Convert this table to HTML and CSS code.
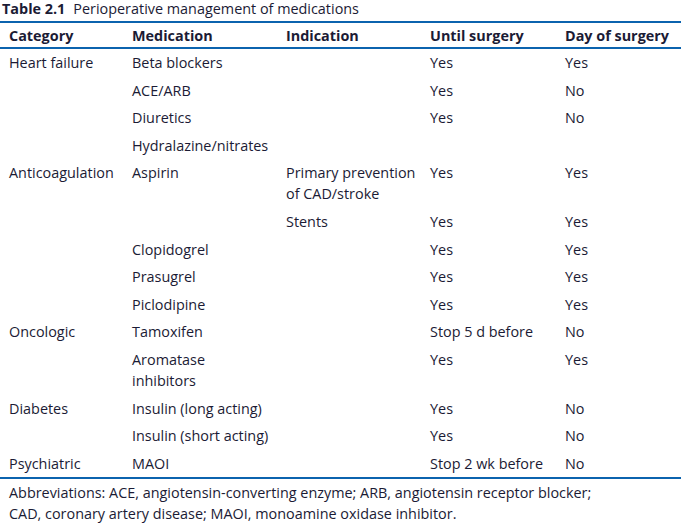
FILE: index.html
```html
<!DOCTYPE html>
<html>
<head>
<meta charset="utf-8">
<link rel="stylesheet" href="styles.css">
</head>
<body>
<div class="page">
  <div class="caption"><span class="label">Table 2.1</span><span class="title">Perioperative management of medications</span></div>
  <table class="meds">
    <colgroup>
      <col class="c1"><col class="c2"><col class="c3"><col class="c4"><col class="c5">
    </colgroup>
    <thead>
      <tr><th>Category</th><th>Medication</th><th>Indication</th><th>Until surgery</th><th>Day of surgery</th></tr>
    </thead>
    <tbody>
      <tr><td>Heart failure</td><td>Beta blockers</td><td></td><td>Yes</td><td>Yes</td></tr>
      <tr><td></td><td>ACE/ARB</td><td></td><td>Yes</td><td>No</td></tr>
      <tr><td></td><td>Diuretics</td><td></td><td>Yes</td><td>No</td></tr>
      <tr><td></td><td>Hydralazine/nitrates</td><td></td><td></td><td></td></tr>
      <tr><td>Anticoagulation</td><td>Aspirin</td><td>Primary prevention<br>of CAD/stroke</td><td>Yes</td><td>Yes</td></tr>
      <tr><td></td><td></td><td>Stents</td><td>Yes</td><td>Yes</td></tr>
      <tr><td></td><td>Clopidogrel</td><td></td><td>Yes</td><td>Yes</td></tr>
      <tr><td></td><td>Prasugrel</td><td></td><td>Yes</td><td>Yes</td></tr>
      <tr><td></td><td>Piclodipine</td><td></td><td>Yes</td><td>Yes</td></tr>
      <tr><td>Oncologic</td><td>Tamoxifen</td><td></td><td>Stop 5 d before</td><td>No</td></tr>
      <tr><td></td><td>Aromatase<br>inhibitors</td><td></td><td>Yes</td><td>Yes</td></tr>
      <tr><td>Diabetes</td><td>Insulin (long acting)</td><td></td><td>Yes</td><td>No</td></tr>
      <tr><td></td><td>Insulin (short acting)</td><td></td><td>Yes</td><td>No</td></tr>
      <tr><td>Psychiatric</td><td>MAOI</td><td></td><td>Stop 2 wk before</td><td>No</td></tr>
    </tbody>
  </table>
  <p class="note">Abbreviations: ACE, angiotensin-converting enzyme; ARB, angiotensin receptor blocker;<br>CAD, coronary artery disease; MAOI, monoamine oxidase inhibitor.</p>
</div>
</body>
</html>
```
FILE: styles.css
```css
html, body {
  margin: 0;
  padding: 0;
  background: #ffffff;
}
body {
  font-family: "Open Sans", "Noto Sans", sans-serif;
  font-size: 14.4px;
  color: #1b1b35;
}
.page {
  width: 681px;
}
.caption {
  padding-left: 2px;
  line-height: 18px;
  height: 21px;
}
.caption .label {
  font-weight: 700;
  margin-right: 8px;
}
.meds {
  width: 681px;
  border-collapse: collapse;
  table-layout: fixed;
  border-top: 2px solid #0b63ae;
  border-bottom: 2px solid #0b63ae;
}
.c1 { width: 123px; }
.c2 { width: 154px; }
.c3 { width: 144px; }
.c4 { width: 135px; }
.c5 { width: 125px; }
.meds th {
  text-align: left;
  font-weight: 700;
  padding: 2px 0 1px 9px;
  line-height: 21px;
  border-bottom: 2px solid #0b63ae;
}
.meds td {
  vertical-align: top;
  padding: 3px 0 3.6px 9px;
  line-height: 21px;
  white-space: nowrap;
}
.note {
  margin: 3px 0 0;
  padding-left: 9px;
  line-height: 21px;
}
```
